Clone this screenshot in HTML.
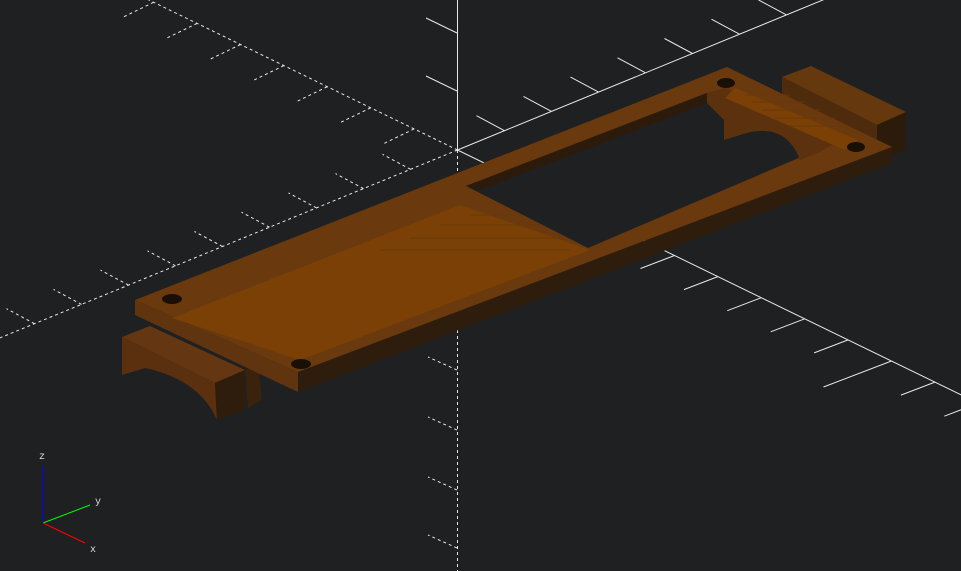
<!DOCTYPE html>
<html><head><meta charset="utf-8">
<style>html,body{margin:0;padding:0;background:#1f2022;overflow:hidden;width:961px;height:571px}svg{display:block}</style>
</head><body>
<svg id="s" width="961" height="571" viewBox="0 0 961 571" xmlns="http://www.w3.org/2000/svg">
<rect width="961" height="571" fill="#1f2022"/>
<g id="grid" stroke="#e8e8e8" stroke-width="1" fill="none"></g>
<!-- left bracket -->
<polygon points="122,337 150,326 245,370 215,383" fill="#643611"/>
<path d="M122,337 L215,383 L217,420 Q200,380 145,368 L122,375 Z" fill="#5a300e"/>
<polygon points="215,383 245,370 245,410 217,420" fill="#2e1c0c"/>
<polygon points="245,370 258,365 262,400 248,408" fill="#3a220c"/>
<!-- right block -->
<polygon points="782,77 811,66 906,112 877,125" fill="#66380e"/>
<polygon points="782,77 877,125 877,160 782,95" fill="#4e2b0c"/>
<polygon points="877,125 906,112 906,150 877,160" fill="#2c1b0b"/>
<!-- plate front side -->
<polygon points="298,372 892,147 892,163 298,392" fill="#2e1c0c"/>
<polygon points="135,300 298,372 298,392 135,315" fill="#5f340f"/>
<!-- plate top face -->
<polygon points="135,300 727,67 892,147 298,372" fill="#6a3a0e"/>
<!-- recessed panel -->
<polygon points="172,318 460,205 590,250 300,360" fill="#7a4005"/>
<!-- rectangular cutout -->
<polygon points="466,186 707,93 822,148 588,248" fill="#1f2022"/>
<polygon points="466,186 707,93 707,103 480,190" fill="#2c1b0b"/>
<!-- right bracket under plate, visible through the hole -->
<path d="M707,93 L725,88 L840,140 L820,152 L800,160 Q785,120 740,135 L724,140 L724,120 L707,103 Z" fill="#5c310e"/>
<polygon points="735,88 858,140 845,150 725,98" fill="#7a4005"/>
<g stroke="#6a3708" stroke-width="1">
<line x1="745" y1="95" x2="790" y2="95"/><line x1="752" y1="102" x2="805" y2="102"/><line x1="762" y1="110" x2="820" y2="110"/><line x1="775" y1="118" x2="835" y2="118"/><line x1="790" y1="126" x2="845" y2="126"/>
<line x1="470" y1="215" x2="520" y2="215"/><line x1="440" y1="225" x2="540" y2="225"/><line x1="410" y1="238" x2="560" y2="238"/><line x1="380" y1="250" x2="570" y2="250"/>
</g>
<polygon points="707,93 727,85 727,67 707,75" fill="#6a3a0e"/>
<!-- holes -->
<ellipse cx="172" cy="299" rx="10" ry="5" fill="#1a0f05"/>
<ellipse cx="301" cy="364" rx="10" ry="5" fill="#1a0f05"/>
<ellipse cx="726" cy="83" rx="9" ry="5" fill="#1a0f05"/>
<ellipse cx="856" cy="147" rx="9" ry="5" fill="#1a0f05"/>
<!-- axis gizmo -->
<line x1="43" y1="523" x2="43" y2="466" stroke="#0000ff"/>
<line x1="43" y1="523" x2="90" y2="505" stroke="#00ff00"/>
<line x1="43" y1="523" x2="85" y2="543" stroke="#ff0000"/>
<text x="39" y="459" fill="#ddd" font-family="Liberation Mono, monospace" font-size="10">z</text>
<text x="95" y="504" fill="#ddd" font-family="Liberation Mono, monospace" font-size="10">y</text>
<text x="90" y="552" fill="#ddd" font-family="Liberation Mono, monospace" font-size="10">x</text>
</svg>
<script>
var g=document.getElementById('grid'),ns='http://www.w3.org/2000/svg';
function L(x1,y1,x2,y2,d){var l=document.createElementNS(ns,'line');l.setAttribute('x1',x1);l.setAttribute('y1',y1);l.setAttribute('x2',x2);l.setAttribute('y2',y2);if(d)l.setAttribute('stroke-dasharray','3,3');g.appendChild(l);}
var O=[457.5,150],X=[43.4,21.1],Y=[47,-19.3];
L(O[0],O[1],O[0]+X[0]*14,O[1]+X[1]*14);
L(O[0],O[1],O[0]+Y[0]*14,O[1]+Y[1]*14);
L(O[0],O[1],O[0],0);
L(O[0],O[1],O[0]-X[0]*14,O[1]-X[1]*14,1);
L(O[0],O[1],O[0]-Y[0]*14,O[1]-Y[1]*14,1);
L(O[0],O[1],O[0],571,1);
for(var k=1;k<14;k++){
 var f=(k%10==0)?2:1;
 var px=O[0]+X[0]*k,py=O[1]+X[1]*k;L(px,py,px-34*f,py+13*f);
 px=O[0]-X[0]*k;py=O[1]-X[1]*k;L(px,py,px-31*f,py+15*f,1);
 px=O[0]+Y[0]*k;py=O[1]+Y[1]*k;L(px,py,px-28*f,py-15*f);
 px=O[0]-Y[0]*k;py=O[1]-Y[1]*k;L(px,py,px-28*f,py-15*f,1);
}
[33,91].forEach(function(y){L(457,y,426,y-15);});
[370,430,490,548].forEach(function(y){L(457,y,428,y-13,1);});
</script>
</body></html>
